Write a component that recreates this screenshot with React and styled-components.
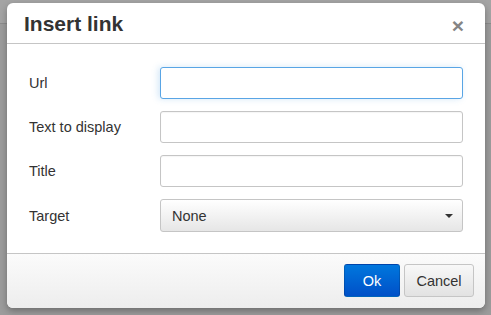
import React from "react";
import styled, { createGlobalStyle } from "styled-components";

const Global = createGlobalStyle`
  html, body { margin: 0; padding: 0; }
  *, *::before, *::after { box-sizing: border-box; }
  body {
    width: 491px; height: 315px; overflow: hidden;
    background: #9c9c9c;
    font-family: "Liberation Sans", Arial, sans-serif;
  }
`;

const Page = styled.div`
  position: relative;
  width: 491px;
  height: 315px;
`;

const EditorBar = styled.div`
  height: 24px;
  background: #a4a4a4;
  border-bottom: 1px solid #8c8c8c;
`;

const Dialog = styled.div`
  position: absolute;
  left: 7px;
  top: 3px;
  width: 478px;
  height: 305px;
  background: #fff;
  border-radius: 6px;
  box-shadow: 0 3px 7px rgba(0, 0, 0, 0.3);
  display: flex;
  flex-direction: column;
  overflow: hidden;
`;

const Header = styled.div`
  height: 41px;
  flex: none;
  border-bottom: 1px solid #c5c5c5;
  display: flex;
  align-items: center;
  justify-content: space-between;
  padding: 0 21px 0 17px;
`;

const Title = styled.h1`
  margin: 0;
  font-size: 21px;
  font-weight: bold;
  color: #333;
  line-height: 24px;
  padding-top: 1px;
`;

const Close = styled.span`
  font-size: 21px;
  font-weight: bold;
  color: #858585;
  line-height: 20px;
  padding-top: 6px;
`;

const Body = styled.div`
  flex: 1;
  padding: 23px 22px 0 22px;
  display: flex;
  flex-direction: column;
  gap: 12px;
`;

const Row = styled.div`
  display: grid;
  grid-template-columns: 131px 1fr;
  align-items: center;
  height: 32px;
`;

const Label = styled.label`
  font-size: 14.5px;
  color: #333;
`;

const Input = styled.div`
  height: 32px;
  border: 1px solid ${(p) => (p.$focus ? "#59a5e5" : "#c5c5c5")};
  border-radius: 3px;
  background: #fff;
  box-shadow: ${(p) =>
    p.$focus ? "-2px 0 6px rgba(89,165,229,0.25)" : "inset 0 1px 1px rgba(0,0,0,0.04)"};
`;

const Select = styled.div`
  height: 33px;
  border: 1px solid #c5c5c5;
  border-radius: 3px;
  background: linear-gradient(to bottom, #fff, #e6e6e6);
  display: flex;
  align-items: center;
  justify-content: space-between;
  padding: 0 9px 0 11px;
  font-size: 14.5px;
  color: #333;
`;

const Caret = styled.span`
  width: 0;
  height: 0;
  border-left: 4px solid transparent;
  border-right: 4px solid transparent;
  border-top: 4px solid #333;
`;

const Footer = styled.div`
  height: 55px;
  flex: none;
  border-top: 1px solid #c5c5c5;
  background: linear-gradient(to bottom, #fbfbfb, #ededed);
  display: flex;
  justify-content: flex-end;
  align-items: flex-start;
  gap: 4px;
  padding: 10px 11px 0 0;
`;

const Button = styled.button`
  height: 33px;
  padding: 0;
  width: ${(p) => p.$w}px;
  border-radius: 3px;
  font-family: "Liberation Sans", Arial, sans-serif;
  font-size: 14.5px;
  cursor: pointer;
  ${(p) =>
    p.$primary
      ? `
    color: #fff;
    border: 1px solid rgba(0,0,0,0.15);
    background: linear-gradient(to bottom, #0077dd, #0050c8);
  `
      : `
    color: #333;
    border: 1px solid #c5c5c5;
    background: linear-gradient(to bottom, #f8f8f8, #e2e2e2);
  `}
`;

export default function App() {
  return (
    <Page>
      <Global />
      <EditorBar />
      <Dialog>
        <Header>
          <Title>Insert link</Title>
          <Close>×</Close>
        </Header>
        <Body>
          <Row>
            <Label>Url</Label>
            <Input $focus />
          </Row>
          <Row>
            <Label>Text to display</Label>
            <Input />
          </Row>
          <Row>
            <Label>Title</Label>
            <Input />
          </Row>
          <Row>
            <Label>Target</Label>
            <Select>
              <span>None</span>
              <Caret />
            </Select>
          </Row>
        </Body>
        <Footer>
          <Button $primary $w={56}>Ok</Button>
          <Button $w={70}>Cancel</Button>
        </Footer>
      </Dialog>
    </Page>
  );
}
